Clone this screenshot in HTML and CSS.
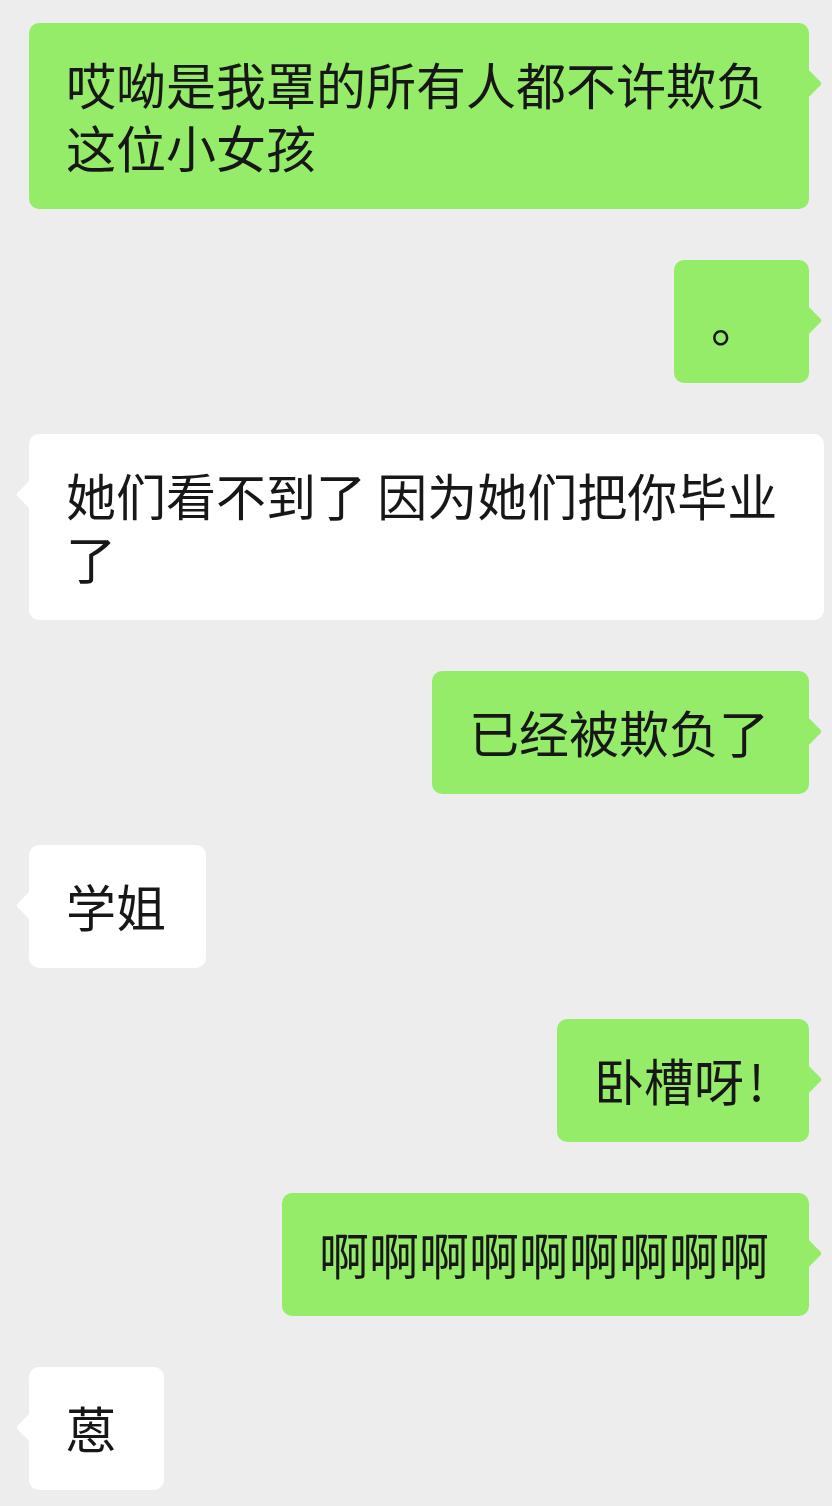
FILE: index.html
```html
<!DOCTYPE html>
<html lang="zh">
<head>
<meta charset="UTF-8">
<meta name="viewport" content="width=device-width, initial-scale=1.0">
<title>聊天</title>
<link rel="stylesheet" href="styles.css">
</head>
<body>
    <div class="chat">
        <div class="msg out">
            <div class="bubble">哎呦是我罩的所有人都不许欺负这位小女孩</div>
        </div>
        <div class="msg out">
            <div class="bubble">。</div>
        </div>
        <div class="msg in">
            <div class="bubble">她们看不到了 因为她们把你毕业了</div>
        </div>
        <div class="msg out">
            <div class="bubble">已经被欺负了</div>
        </div>
        <div class="msg in">
            <div class="bubble">学姐</div>
        </div>
        <div class="msg out">
            <div class="bubble">卧槽呀<span class="bang">!</span></div>
        </div>
        <div class="msg out">
            <div class="bubble">啊啊啊啊啊啊啊啊啊</div>
        </div>
        <div class="msg in">
            <div class="bubble">蒽</div>
        </div>
    </div>
</body>
</html>
```

FILE: styles.css
```css
body {
  margin: 0;
  background-color: #ededed;
  font-family: "Noto Sans CJK SC", "Noto Sans", sans-serif;
  color: #171717;
}
.chat {
  display: flex;
  flex-direction: column;
  gap: 51px;
  padding: 23px 0;
}
.msg {
  display: flex;
}
.msg.in {
  justify-content: flex-start;
  padding-left: 29px;
}
.msg.out {
  justify-content: flex-end;
  padding-right: 23px;
}
.bubble {
  position: relative;
  box-sizing: border-box;
  min-width: 135px;
  padding: 29px 40px 31px 37px;
  border-radius: 10px;
  font-size: 50px;
  line-height: 63px;
  word-break: break-all;
}
.bubble::after {
  content: "";
  position: absolute;
  top: 50px;
  width: 21px;
  height: 21px;
  border-radius: 3px;
  transform: rotate(45deg);
}
.msg.out .bubble {
  max-width: 780px;
  background-color: #95ec69;
}
.msg.out .bubble::after {
  right: -9px;
  background-color: #95ec69;
}
.msg.in .bubble {
  max-width: 795px;
  background-color: #fff;
}
.msg.in .bubble::after {
  left: -9px;
  background-color: #fff;
}
.bang {
  display: inline-block;
  width: 25px;
  text-align: center;
}
```
